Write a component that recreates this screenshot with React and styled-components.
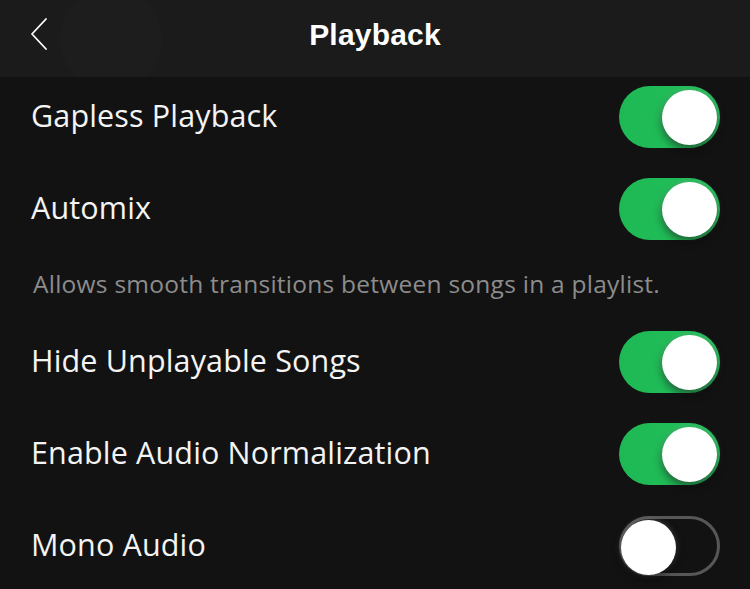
import React from "react";
import styled, { createGlobalStyle } from "styled-components";

const Global = createGlobalStyle`
	html, body {
		margin: 0;
		padding: 0;
		background: #121212;
	}
	body {
		font-family: "Open Sans", "Liberation Sans", Arial, sans-serif;
		-webkit-font-smoothing: antialiased;
	}
`;

const Screen = styled.div`
	width: 750px;
	height: 589px;
	overflow: hidden;
	background: #121212;
	display: flex;
	flex-direction: column;
`;

const Header = styled.header`
	position: relative;
	z-index: 2;
	flex: 0 0 77px;
	box-sizing: border-box;
	padding-bottom: 8px;
	background: #1b1b1b;
	display: flex;
	align-items: center;
	justify-content: center;
	overflow: hidden;
`;

const BackButton = styled.button`
	position: absolute;
	left: 24px;
	top: 16px;
	width: 30px;
	height: 36px;
	padding: 0;
	border: 0;
	background: none;
	display: flex;
	align-items: center;
	justify-content: center;
`;

const Ripple = styled.div`
	position: absolute;
	left: 60px;
	top: -12px;
	width: 102px;
	height: 102px;
	border-radius: 50%;
	background: rgba(255, 255, 255, 0.012);
`;

const Title = styled.h1`
	margin: 0;
	color: #fff;
	font-family: "Liberation Sans", Arial, sans-serif;
	font-size: 30px;
	font-weight: 700;
	letter-spacing: 0.2px;
`;

const List = styled.div`
	margin-top: -6px;
	display: flex;
	flex-direction: column;
`;

const Row = styled.div`
	height: 92px;
	flex: 0 0 92px;
	display: flex;
	align-items: center;
	justify-content: space-between;
	padding: 0 30px 0 31px;
`;

const Label = styled.span`
	color: #f4f4f4;
	font-size: 30.5px;
	line-height: 1;
	margin-bottom: 4px;
	letter-spacing: 0.15px;
`;

const Description = styled.p`
	margin: 0;
	height: 61px;
	box-sizing: border-box;
	padding: 0 0 3px 33px;
	display: flex;
	align-items: center;
	color: #8c8c8c;
	font-size: 24.5px;
	line-height: 1;
	letter-spacing: 0.25px;
`;

const Track = styled.div`
	position: relative;
	box-sizing: border-box;
	width: 101px;
	height: ${({ $on }) => ($on ? "62px" : "60px")};
	border-radius: 31px;
	background: ${({ $on }) => ($on ? "linear-gradient(90deg, #1eb955, #23c05b)" : "transparent")};
	border: ${({ $on }) => ($on ? "none" : "3px solid #575757")};
`;

const Knob = styled.div`
	position: absolute;
	top: ${({ $on }) => ($on ? "4px" : "1px")};
	${({ $on }) => ($on ? "right: 3px;" : "left: -1px;")}
	width: 55px;
	height: 55px;
	border-radius: 50%;
	background: #fff;
	box-shadow: 0 4px 9px rgba(0, 0, 0, 0.55), 0 0 6px rgba(255, 255, 255, 0.25);
`;

const Toggle = ({ on }) => (
	<Track $on={on}>
		<Knob $on={on} />
	</Track>
);

const Chevron = () => (
	<svg width="20" height="34" viewBox="0 0 20 34" fill="none">
		<path d="M17 2 L3 17 L17 32" stroke="#fff" strokeWidth="1.8" strokeLinecap="round" strokeLinejoin="round" />
	</svg>
);

const settings = [
	{ label: "Gapless Playback", on: true },
	{ label: "Automix", on: true, note: "Allows smooth transitions between songs in a playlist." },
	{ label: "Hide Unplayable Songs", on: true },
	{ label: "Enable Audio Normalization", on: true },
	{ label: "Mono Audio", on: false },
];

const App = () => (
	<Screen>
		<Global />
		<Header>
			<Ripple />
			<BackButton aria-label="Back">
				<Chevron />
			</BackButton>
			<Title>Playback</Title>
		</Header>
		<List>
			{settings.map(s => (
				<React.Fragment key={s.label}>
					<Row>
						<Label>{s.label}</Label>
						<Toggle on={s.on} />
					</Row>
					{s.note && <Description>{s.note}</Description>}
				</React.Fragment>
			))}
		</List>
	</Screen>
);

export default App;
